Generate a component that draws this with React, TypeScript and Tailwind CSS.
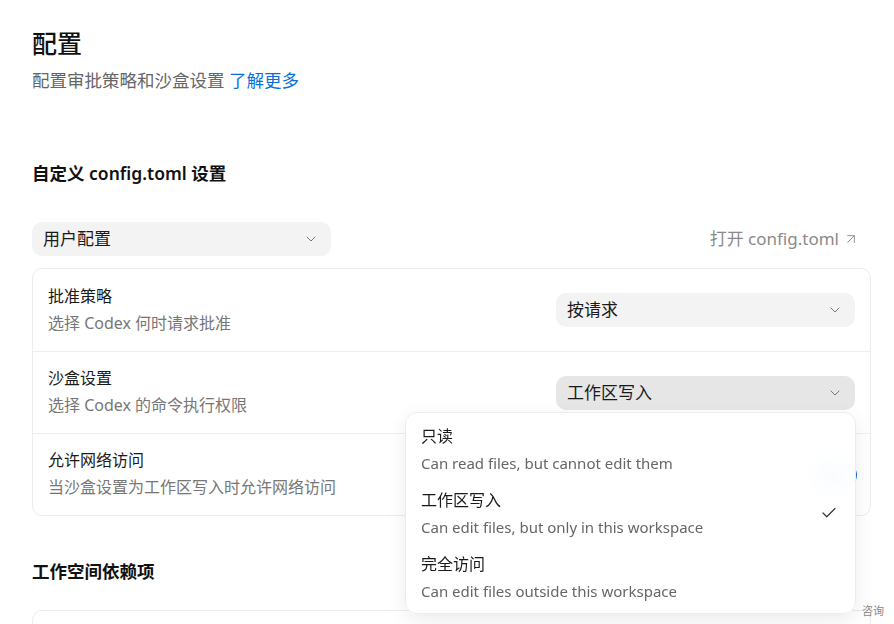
import { ChevronDown, ArrowUpRight, Check } from 'lucide-react'

const font = { fontFamily: '"Noto Sans", "Noto Sans CJK SC", sans-serif' }

type Row = { title: string; desc: string; value?: string; active?: boolean; toggle?: boolean }

const rows: Row[] = [
  { title: '批准策略', desc: '选择 Codex 何时请求批准', value: '按请求' },
  { title: '沙盒设置', desc: '选择 Codex 的命令执行权限', value: '工作区写入', active: true },
  { title: '允许网络访问', desc: '当沙盒设置为工作区写入时允许网络访问', toggle: true },
]

const options = [
  { label: '只读', desc: 'Can read files, but cannot edit them' },
  { label: '工作区写入', desc: 'Can edit files, but only in this workspace', checked: true },
  { label: '完全访问', desc: 'Can edit files outside this workspace' },
]

function Select({ value, active, className }: { value: string; active?: boolean; className?: string }) {
  return (
    <div
      className={`flex items-center justify-between h-[34px] rounded-[10px] pl-[11px] pr-3 text-[17px] text-[#1a1a1a] ${active ? 'bg-[#e6e6e6]' : 'bg-[#f3f3f3]'} ${className ?? ''}`}
    >
      <span>{value}</span>
      <ChevronDown size={16} strokeWidth={1.5} className="text-[#777]" />
    </div>
  )
}

export default function App() {
  return (
    <div className="relative w-[894px] h-[624px] overflow-hidden bg-white" style={font}>
      <div className="pl-8 pr-[23px] pt-[26px]">
        <h1 className="text-[25px] leading-[34px] font-medium text-[#111]">配置</h1>
        <p className="mt-[8px] text-[17.5px] leading-[24px] text-[#666]">
          配置审批策略和沙盒设置 <span className="text-[#0a6fd8]">了解更多</span>
        </p>

        <h2 className="mt-[69px] text-[17.5px] leading-[24px] font-semibold text-[#111]">自定义 config.toml 设置</h2>

        <div className="mt-[37px] flex items-center justify-between">
          <Select value="用户配置" className="w-[299px]" />
          <div className="flex items-center gap-1 pr-[12px] text-[17px] text-[#8a8a8a]">
            <span>打开 config.toml</span>
            <ArrowUpRight size={16} strokeWidth={1.4} />
          </div>
        </div>

        <div className="mt-[12px] rounded-[10px] border border-[#ececec]">
          {rows.map((r, i) => (
            <div
              key={r.title}
              className={`flex items-center justify-between h-[82px] pl-[15px] pr-[15px] ${i > 0 ? 'border-t border-[#efefef]' : ''}`}
            >
              <div className="flex flex-col gap-[5px] -mt-[2px]">
                <div className="text-[16px] leading-[22px] text-[#1a1a1a]">{r.title}</div>
                <div className="text-[16px] leading-[22px] text-[#777]">{r.desc}</div>
              </div>
              {r.value && <Select value={r.value} active={r.active} className="w-[299px]" />}
              {r.toggle && (
                <div className="w-[40px] h-[22px] rounded-full bg-[#1670d8] flex items-center justify-end pr-[2px] mr-[-2px]">
                  <div className="w-[18px] h-[18px] rounded-full bg-white" />
                </div>
              )}
            </div>
          ))}
        </div>

        <h2 className="mt-[43px] text-[17.5px] leading-[24px] font-semibold text-[#111]">工作空间依赖项</h2>
        <div className="mt-[27px] h-[40px] rounded-t-[10px] border border-[#ececec]" />
      </div>

      <div className="absolute right-[10px] top-[603px] text-[11px] text-[#888]">咨询</div>

      <div className="absolute left-[405px] top-[412px] w-[451px] rounded-[12px] border border-[#ececec] bg-white/95 backdrop-blur-md shadow-[0_6px_20px_rgba(0,0,0,0.08)] px-[15px] py-[4px]">
        {options.map((o) => (
          <div key={o.label} className="flex items-center justify-between h-[64px]">
            <div className="flex flex-col gap-[6px]">
              <div className="text-[16px] leading-[22px] text-[#1a1a1a]">{o.label}</div>
              <div className="text-[15px] leading-[20px] text-[#666]">{o.desc}</div>
            </div>
            {o.checked && <Check size={18} strokeWidth={1.6} className="text-[#333] mr-[2px]" />}
          </div>
        ))}
      </div>
    </div>
  )
}
